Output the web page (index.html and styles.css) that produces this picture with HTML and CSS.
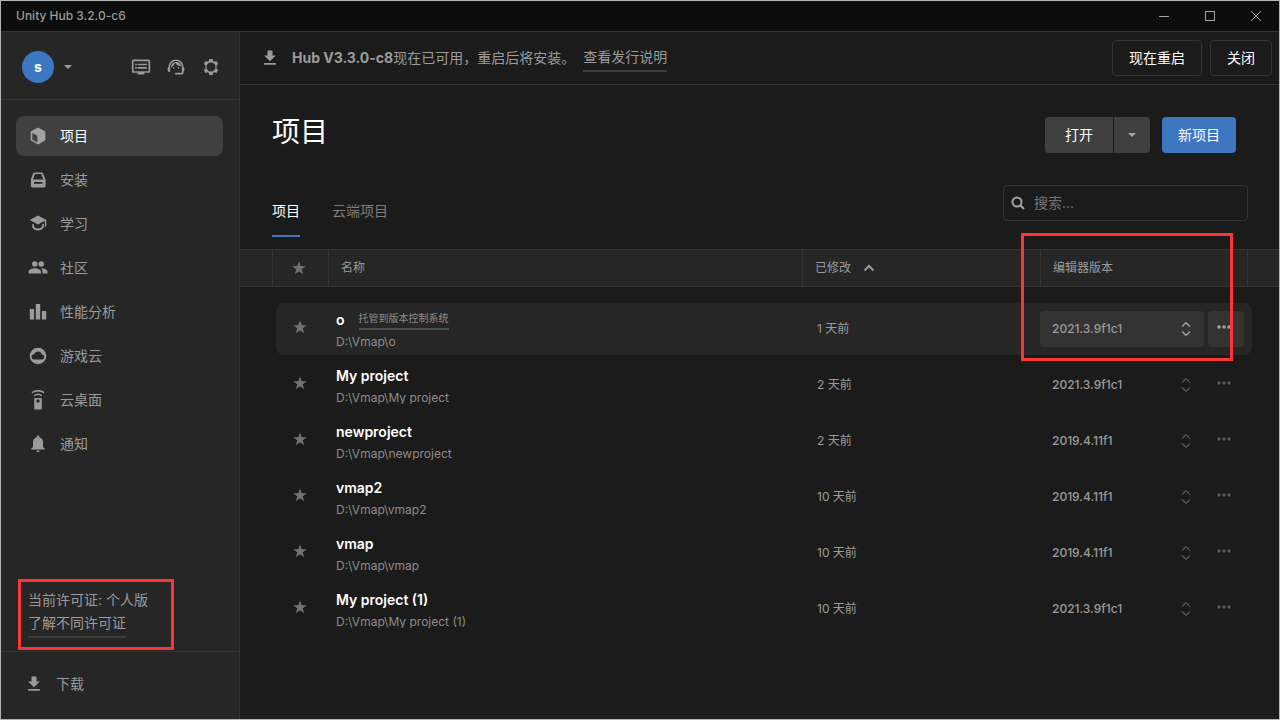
FILE: index.html
```html
<!DOCTYPE html>
<html lang="zh-CN">
<head>
<meta charset="utf-8">
<meta name="viewport" content="width=device-width, initial-scale=1">
<title>Unity Hub 3.2.0-c6</title>
<link rel="stylesheet" href="styles.css">
</head>
<body>
<svg class="sprite" aria-hidden="true">
  <symbol id="download" viewBox="0 0 24 24"><path d="M19 9h-4V3H9v6H5l7 7 7-7zM5 18v2h14v-2H5z"/></symbol>
  <symbol id="caret" viewBox="0 0 24 24"><path d="M6 9l6 6 6-6z"/></symbol>
  <symbol id="star" viewBox="0 0 24 24"><path d="M12 17.3l6.2 3.9-2-7.300L22 9.400l-7.400-.4L12 2 9.400 9 2 9.400 7.800 13.900l-2 7.300z"/></symbol>
  <symbol id="unfold" viewBox="0 0 16 16"><path d="M4 5.500 8 1.700l4 3.800M4 10.500l4 3.800 4-3.800" fill="none" stroke="currentColor" stroke-width="1.300"/></symbol>
  <symbol id="more" viewBox="0 0 16 6"><circle cx="3" cy="3" r="1.800"/><circle cx="8" cy="3" r="1.800"/><circle cx="13" cy="3" r="1.800"/></symbol>
</svg>
<div class="window">
  <header class="titlebar">
    <span class="titlebar-name">Unity Hub 3.2.0-c6</span>
    <button class="win-btn" aria-label="最小化"><svg viewBox="0 0 12 12"><path d="M1 6.500h10"/></svg></button>
    <button class="win-btn" aria-label="最大化"><svg viewBox="0 0 12 12"><path d="M1.500 1.500h9v9h-9z"/></svg></button>
    <button class="win-btn" aria-label="关闭窗口"><svg viewBox="0 0 12 12"><path d="M1 1l10 10M11 1 1 11"/></svg></button>
  </header>
  <div class="body">
    <aside class="sidebar">
      <div class="account">
        <button class="account-menu" aria-label="账户"><span class="avatar">s</span><svg class="icon-caret"><use href="#caret"/></svg></button>
        <div class="account-tools">
          <button class="tool" aria-label="动态"><svg class="icon-20" viewBox="0 0 24 24"><path d="M21 3H3c-1.100 0-2 .9-2 2v12c0 1.100.9 2 2 2h5v2h8v-2h5c1.100 0 2-.9 2-2V5c0-1.100-.9-2-2-2zm0 14H3V5h18v12zM8 8h11v2H8zM8 12h11v2H8zM5 8h2v2H5zM5 12h2v2H5z"/></svg></button>
          <button class="tool" aria-label="支持"><svg class="icon-20" viewBox="0 0 24 24"><path d="M21 12.220C21 6.730 16.740 3 12 3c-4.690 0-9 3.650-9 9.280-.6.340-1 .98-1 1.720v2c0 1.100.9 2 2 2h1v-6.100c0-3.870 3.130-7 7-7s7 3.130 7 7V19h-8v2h8c1.100 0 2-.9 2-2v-1.220c.59-.31 1-.92 1-1.640v-2.300c0-.7-.41-1.310-1-1.620z"/><circle cx="9" cy="13" r="1"/><circle cx="15" cy="13" r="1"/><path d="M18 11.030A6.040 6.040 0 0 0 12.050 6c-3.030 0-6.290 2.510-6.030 6.450a8.080 8.080 0 0 0 4.860-5.890c1.310 2.630 4 4.440 7.120 4.470z"/></svg></button>
          <button class="tool" aria-label="设置"><svg class="icon-20" viewBox="0 0 20 20"><path d="M8.300 2h3.400l.4 2.100 1.300.7 2-.7 1.700 2.900-1.600 1.400v3.200l1.600 1.400-1.700 2.900-2-.7-1.300.7-.4 2.100H8.300l-.4-2.100-1.300-.7-2 .7L2.900 13l1.600-1.400V8.400L2.900 7l1.700-2.900 2 .7 1.300-.7zM10 5.400a4.600 4.600 0 1 0 0 9.200 4.600 4.600 0 0 0 0-9.200z" fill-rule="evenodd"/></svg></button>
        </div>
      </div>
      <nav class="nav">
        <a class="nav-item nav-item--active" href="#projects"><svg class="icon-20" viewBox="0 0 20 20"><path fill-rule="evenodd" d="M10 1.500l7.300 4v8.800L10 18.500l-7.300-4.200V5.500zM4.300 6.900v6.500l5.100 3V9.700z"/></svg>项目</a>
        <a class="nav-item" href="#installs"><svg class="icon-20" viewBox="0 0 20 20"><path fill-rule="evenodd" d="M6.500 2.500h7c.7 0 1.200.4 1.500 1l2.600 6.200v6.100c0 1-.8 1.700-1.700 1.700H4.600c-1 0-1.700-.8-1.700-1.700V9.700L5 3.500c.3-.6.800-1 1.500-1zM7 4L5 9.500h10.500L13.200 4zM6 12v1.700h8.500V12z"/></svg>安装</a>
        <a class="nav-item" href="#learn"><svg class="icon-20" viewBox="0 0 20 20"><path d="M10 1.500L1.700 6 10 10.500l6.800-3.700v5.700h1.500V6zM4.200 9.700v3.500c1.300 2.100 3.300 3.300 5.800 3.300s4.500-1.200 5.800-3.300V9.700l-1.700.9v2c-.9 1.300-2.300 2-4.100 2s-3.200-.7-4.100-2v-2z"/></svg>学习</a>
        <a class="nav-item" href="#community"><svg class="icon-20" viewBox="0 0 20 20"><circle cx="6.800" cy="6" r="2.800"/><circle cx="13.200" cy="6" r="2.800"/><path d="M.5 15.500v-2c0-2 3.500-3.300 6.300-3.300s6.200 1.300 6.200 3.300v2zM13 10.200c2.800 0 6.500 1.200 6.500 3.300v2h-5v-2c0-1.400-.6-2.400-1.500-3.300z"/></svg>社区</a>
        <a class="nav-item" href="#profiler"><svg class="icon-20" viewBox="0 0 20 20"><path d="M1.800 7h4.300v10.500H1.800zM7.800 2h4.400v15.500H7.800zM13.900 9h4.300v8.500h-4.300z"/></svg>性能分析</a>
        <a class="nav-item" href="#cloud"><svg class="icon-20" viewBox="0 0 20 20"><path fill-rule="evenodd" d="M10 1.700a8.300 8.300 0 1 0 0 16.600 8.300 8.300 0 0 0 0-16.600zM6.300 13.400a2.600 2.600 0 0 1-.2-5.200 4 4 0 0 1 7.700.4 2.400 2.400 0 0 1 .2 4.800z"/></svg>游戏云</a>
        <a class="nav-item" href="#desktop"><svg class="icon-20" viewBox="0 0 20 20"><path fill-rule="evenodd" d="M7 8h6c.5 0 .8.300.8.800v9.900c0 .5-.3.800-.8.800H7c-.5 0-.8-.3-.8-.8V8.800c0-.5.300-.8.800-.8zM10 9.300a1.700 1.700 0 1 0 0 3.400 1.700 1.700 0 0 0 0-3.400z"/><path d="M4 2.800c3.300-2.900 8.700-2.900 12 0M6.200 5.800c2.200-1.800 5.400-1.800 7.600 0" fill="none" stroke="currentColor" stroke-width="1.500"/></svg>云桌面</a>
        <a class="nav-item" href="#notices"><svg class="icon-20" viewBox="0 0 20 20"><path d="M10 1.500c.8 0 1.200.5 1.200 1.200v.5c2.500.6 3.800 2.600 3.800 5V13l1.800 1.800v.8H3.200v-.8L5 13V8.200c0-2.400 1.300-4.400 3.800-5v-.5c0-.7.400-1.200 1.200-1.200zM8.400 16.600h3.200c0 .9-.7 1.600-1.600 1.600s-1.600-.7-1.600-1.600z"/></svg>通知</a>
      </nav>
      <div class="license">
        <span>当前许可证: 个人版</span>
        <a class="under-link" href="#licenses">了解不同许可证</a>
      </div>
      <button class="downloads"><svg class="icon-20"><use href="#download"/></svg>下载</button>
    </aside>
    <main class="main">
      <div class="banner">
        <svg class="icon-20"><use href="#download"/></svg>
        <span class="banner-text"><b>Hub V3.3.0-c8</b>现在已可用，重启后将安装。</span>
        <a class="under-link" href="#notes">查看发行说明</a>
        <div class="banner-actions">
          <button class="btn btn--outline">现在重启</button>
          <button class="btn btn--outline">关闭</button>
        </div>
      </div>
      <div class="heading">
        <h1>项目</h1>
        <div class="split">
          <button class="btn btn--gray btn--open">打开</button>
          <button class="btn btn--gray btn--caret" aria-label="更多打开方式"><svg class="icon-caret"><use href="#caret"/></svg></button>
        </div>
        <button class="btn btn--blue">新项目</button>
      </div>
      <div class="filter">
        <nav class="tabs">
          <a class="tab tab--active" href="#local">项目</a>
          <a class="tab" href="#remote">云端项目</a>
        </nav>
        <label class="search">
          <svg viewBox="0 0 16 16"><circle cx="7" cy="7" r="4.500"/><path d="M10.300 10.300l3.700 3.700"/></svg>
          <input type="search" placeholder="搜索..." aria-label="搜索">
        </label>
      </div>
      <div class="list">
        <table class="projects">
          <thead>
            <tr>
              <td></td>
              <th aria-label="收藏"><svg class="icon-star"><use href="#star"/></svg></th>
              <th>名称</th>
              <th>已修改<svg class="icon-sort" viewBox="0 0 12 12"><path d="M1.500 8.500 6 4l4.500 4.500"/></svg></th>
              <th>编辑器版本</th>
              <td></td>
            </tr>
          </thead>
          <tbody>
            <tr class="hovered">
              <td><button class="fav" aria-label="收藏 o"><svg class="icon-star"><use href="#star"/></svg></button></td>
              <td><div class="name">o <a class="under-link vcs" href="#vcs">托管到版本控制系统</a></div><div class="path">D:\Vmap\o</div></td>
              <td>1 天前</td>
              <td><label class="version"><select aria-label="o 编辑器版本"><option>2021.3.9f1c1</option></select><svg class="icon-unfold"><use href="#unfold"/></svg></label></td>
              <td><button class="more" aria-label="o 更多"><svg><use href="#more"/></svg></button></td>
            </tr>
            <tr>
              <td><button class="fav" aria-label="收藏 My project"><svg class="icon-star"><use href="#star"/></svg></button></td>
              <td><div class="name">My project</div><div class="path">D:\Vmap\My project</div></td>
              <td>2 天前</td>
              <td><label class="version"><select aria-label="My project 编辑器版本"><option>2021.3.9f1c1</option></select><svg class="icon-unfold"><use href="#unfold"/></svg></label></td>
              <td><button class="more" aria-label="My project 更多"><svg><use href="#more"/></svg></button></td>
            </tr>
            <tr>
              <td><button class="fav" aria-label="收藏 newproject"><svg class="icon-star"><use href="#star"/></svg></button></td>
              <td><div class="name">newproject</div><div class="path">D:\Vmap\newproject</div></td>
              <td>2 天前</td>
              <td><label class="version"><select aria-label="newproject 编辑器版本"><option>2019.4.11f1</option></select><svg class="icon-unfold"><use href="#unfold"/></svg></label></td>
              <td><button class="more" aria-label="newproject 更多"><svg><use href="#more"/></svg></button></td>
            </tr>
            <tr>
              <td><button class="fav" aria-label="收藏 vmap2"><svg class="icon-star"><use href="#star"/></svg></button></td>
              <td><div class="name">vmap2</div><div class="path">D:\Vmap\vmap2</div></td>
              <td>10 天前</td>
              <td><label class="version"><select aria-label="vmap2 编辑器版本"><option>2019.4.11f1</option></select><svg class="icon-unfold"><use href="#unfold"/></svg></label></td>
              <td><button class="more" aria-label="vmap2 更多"><svg><use href="#more"/></svg></button></td>
            </tr>
            <tr>
              <td><button class="fav" aria-label="收藏 vmap"><svg class="icon-star"><use href="#star"/></svg></button></td>
              <td><div class="name">vmap</div><div class="path">D:\Vmap\vmap</div></td>
              <td>10 天前</td>
              <td><label class="version"><select aria-label="vmap 编辑器版本"><option>2019.4.11f1</option></select><svg class="icon-unfold"><use href="#unfold"/></svg></label></td>
              <td><button class="more" aria-label="vmap 更多"><svg><use href="#more"/></svg></button></td>
            </tr>
            <tr>
              <td><button class="fav" aria-label="收藏 My project (1)"><svg class="icon-star"><use href="#star"/></svg></button></td>
              <td><div class="name">My project (1)</div><div class="path">D:\Vmap\My project (1)</div></td>
              <td>10 天前</td>
              <td><label class="version"><select aria-label="My project (1) 编辑器版本"><option>2021.3.9f1c1</option></select><svg class="icon-unfold"><use href="#unfold"/></svg></label></td>
              <td><button class="more" aria-label="My project (1) 更多"><svg><use href="#more"/></svg></button></td>
            </tr>
          </tbody>
        </table>
        <div class="mark mark--version"></div>
      </div>
    </main>
  </div>
</div>
</body>
</html>
```
FILE: styles.css
```css
:root {
  --line: #333;
  --panel: #262626;
  --page: #1b1b1b;
  --text: #9b9b9b;
  --blue: #3d77c2;
}

* { box-sizing: border-box; }

body {
  margin: 0;
  color: var(--text);
  font: 14px/20px Inter, "Noto Sans CJK SC", sans-serif;
}

button, input, select { font: inherit; color: inherit; }

button {
  padding: 0;
  border: 0;
  background: none;
  display: flex;
  align-items: center;
  justify-content: center;
}

a { color: inherit; text-decoration: none; }
svg { fill: currentColor; flex: none; display: block; }
.sprite { display: none; }
.icon-20 { width: 20px; height: 20px; }
.icon-caret { width: 16px; height: 16px; }
.icon-star { width: 16px; height: 16px; color: #707070; }

.window {
  min-height: 100vh;
  display: flex;
  flex-direction: column;
  border: 1px solid #b4b6b6;
  background: var(--page);
}

.titlebar {
  display: flex;
  height: 31px;
  padding-left: 15px;
  align-items: center;
  background: #0d0d0d;
  border-bottom: 1px solid var(--line);
  font-size: 12px;
  font-weight: 500;
}
.titlebar-name { flex: 1; }
.win-btn { width: 46px; height: 30px; }
.win-btn svg { width: 12px; height: 12px; fill: none; stroke: #a8a8a8; }

.body { flex: 1; display: flex; }

.sidebar {
  width: 239px;
  flex: none;
  display: flex;
  flex-direction: column;
  background: var(--panel);
  border-right: 1px solid var(--line);
}

.account {
  display: flex;
  justify-content: space-between;
  align-items: center;
  height: 68px;
  padding: 2px 18px 0 21px;
  border-bottom: 1px solid var(--line);
}
.account-menu { gap: 6px; }
.avatar {
  width: 32px;
  height: 32px;
  border-radius: 50%;
  background: var(--blue);
  color: #fff;
  font-weight: 700;
  line-height: 32px;
}
.account-tools { display: flex; gap: 15px; }

.nav {
  display: flex;
  flex-direction: column;
  gap: 4px;
  padding: 16px 16px 0 15px;
}
.nav-item {
  display: flex;
  align-items: center;
  gap: 12px;
  height: 40px;
  padding-left: 12px;
  border-radius: 8px;
}
.nav-item--active { background: #404040; color: #fff; }
.nav-item--active svg { color: #a3a3a3; }

.license {
  display: flex;
  flex-direction: column;
  align-items: flex-start;
  gap: 3px;
  margin: auto 65px 1px 17px;
  padding: 8px 7px 9px;
  border: 3px solid #fb3636;
}
.under-link { padding-bottom: 3px; border-bottom: 2px solid #3c3c3c; }

.downloads {
  justify-content: flex-start;
  gap: 12px;
  height: 68px;
  padding: 0 0 3px 23px;
  border-top: 1px solid var(--line);
}

.main { flex: 1; min-width: 0; }

.banner {
  display: flex;
  align-items: center;
  height: 53px;
  padding: 0 7px 0 20px;
  border-bottom: 1px solid var(--line);
}
.banner-text { margin: 0 8px 0 12px; }
.banner .under-link { margin-top: 3px; }
.banner-actions { display: flex; gap: 8px; margin-left: auto; }

.btn {
  height: 36px;
  padding: 0 16px;
  border-radius: 4px;
  color: #fff;
}
.btn--outline { border: 1px solid var(--line); }
.btn--gray { background: #404040; }
.btn--blue { background: var(--blue); }
.btn--open { padding: 0 20px; border-radius: 4px 0 0 4px; }
.btn--caret { width: 36px; padding: 0; border-radius: 0 4px 4px 0; color: #a3a3a3; }
.split { display: flex; gap: 1px; }

.heading {
  display: flex;
  gap: 12px;
  align-items: flex-start;
  padding: 32px 43px 0 32px;
}
h1 {
  flex: 1;
  margin: 0;
  color: #fff;
  font-size: 28px;
  line-height: 30px;
  font-weight: 400;
}

.filter {
  display: flex;
  justify-content: space-between;
  align-items: flex-start;
  padding: 32px 31px 12px 32px;
}
.tabs { display: flex; gap: 32px; padding-top: 16px; }
.tab { height: 36px; color: #7c7c7c; border-bottom: 2px solid transparent; }
.tab--active { color: #fff; border-color: var(--blue); }

.search {
  display: flex;
  align-items: center;
  gap: 8px;
  width: 245px;
  height: 36px;
  padding: 0 6px;
  border: 1px solid var(--line);
  border-radius: 4px;
}
.search svg { width: 16px; height: 16px; fill: none; stroke: #a3a3a3; stroke-width: 2; }
.search input { flex: 1; min-width: 0; padding: 0; border: 0; outline: 0; background: none; }
.search input::placeholder { color: #757575; }

.list { position: relative; }

.projects, .projects thead, .projects tbody { display: block; }
.projects tr { display: grid; align-items: center; }
.projects th, .projects td { padding: 0; text-align: left; }

.projects thead tr {
  grid-template-columns: 32px 56px minmax(0, 1fr) 238px 207px 32px;
  align-items: stretch;
  height: 38px;
  background: var(--panel);
  border: solid var(--line);
  border-width: 1px 0;
}
.projects th {
  display: flex;
  align-items: center;
  padding-left: 12px;
  border-left: 1px solid var(--line);
  font-size: 12px;
  font-weight: 400;
}
.projects th:nth-child(2) { padding-left: 18px; }
.projects thead td:last-child { border-left: 1px solid var(--line); }
.icon-sort { width: 12px; height: 12px; margin-left: 12px; fill: none; stroke: currentColor; stroke-width: 2; }

.projects tbody { padding: 16px 27px 16px 36px; }
.projects tbody tr {
  grid-template-columns: 52px minmax(0, 1fr) 223px 168px 44px;
  height: 52px;
  margin-bottom: 4px;
  border-radius: 8px;
}
.projects tbody td { font-size: 12px; }
.projects tbody .hovered { background: var(--panel); }

.fav { width: 48px; height: 24px; padding-bottom: 4px; }
.projects td:nth-child(2) { padding-left: 8px; }
.name { display: flex; gap: 14px; color: #fff; font-size: 14px; font-weight: 600; line-height: 20px; }
.vcs { color: #8c8c8c; font-size: 10px; font-weight: 400; line-height: 16px; padding-bottom: 2px; border-color: #4a4a4a; }
.path { height: 13px; margin: 5px 0 1px; color: #8c8c8c; line-height: 14px; overflow: hidden; }

.version { position: relative; display: block; margin-right: 4px; }
.version select {
  width: 100%;
  height: 36px;
  padding: 0 12px;
  border: 0;
  border-radius: 4px;
  background: transparent;
  font-weight: 500;
  appearance: none;
}
.icon-unfold { position: absolute; right: 10px; top: 10px; width: 16px; height: 16px; pointer-events: none; color: #555; }
.more { width: 36px; height: 36px; padding: 0 4px 4px 0; border-radius: 4px; color: #555; }
.more svg { width: 16px; height: 6px; }
.hovered .version select, .hovered .more { background: #333; }
.hovered .icon-unfold, .hovered .more { color: #a3a3a3; }

.mark { position: absolute; border: 3px solid #fb3636; pointer-events: none; }
.mark--version { top: -16px; right: 46px; width: 212px; height: 128px; }
```
